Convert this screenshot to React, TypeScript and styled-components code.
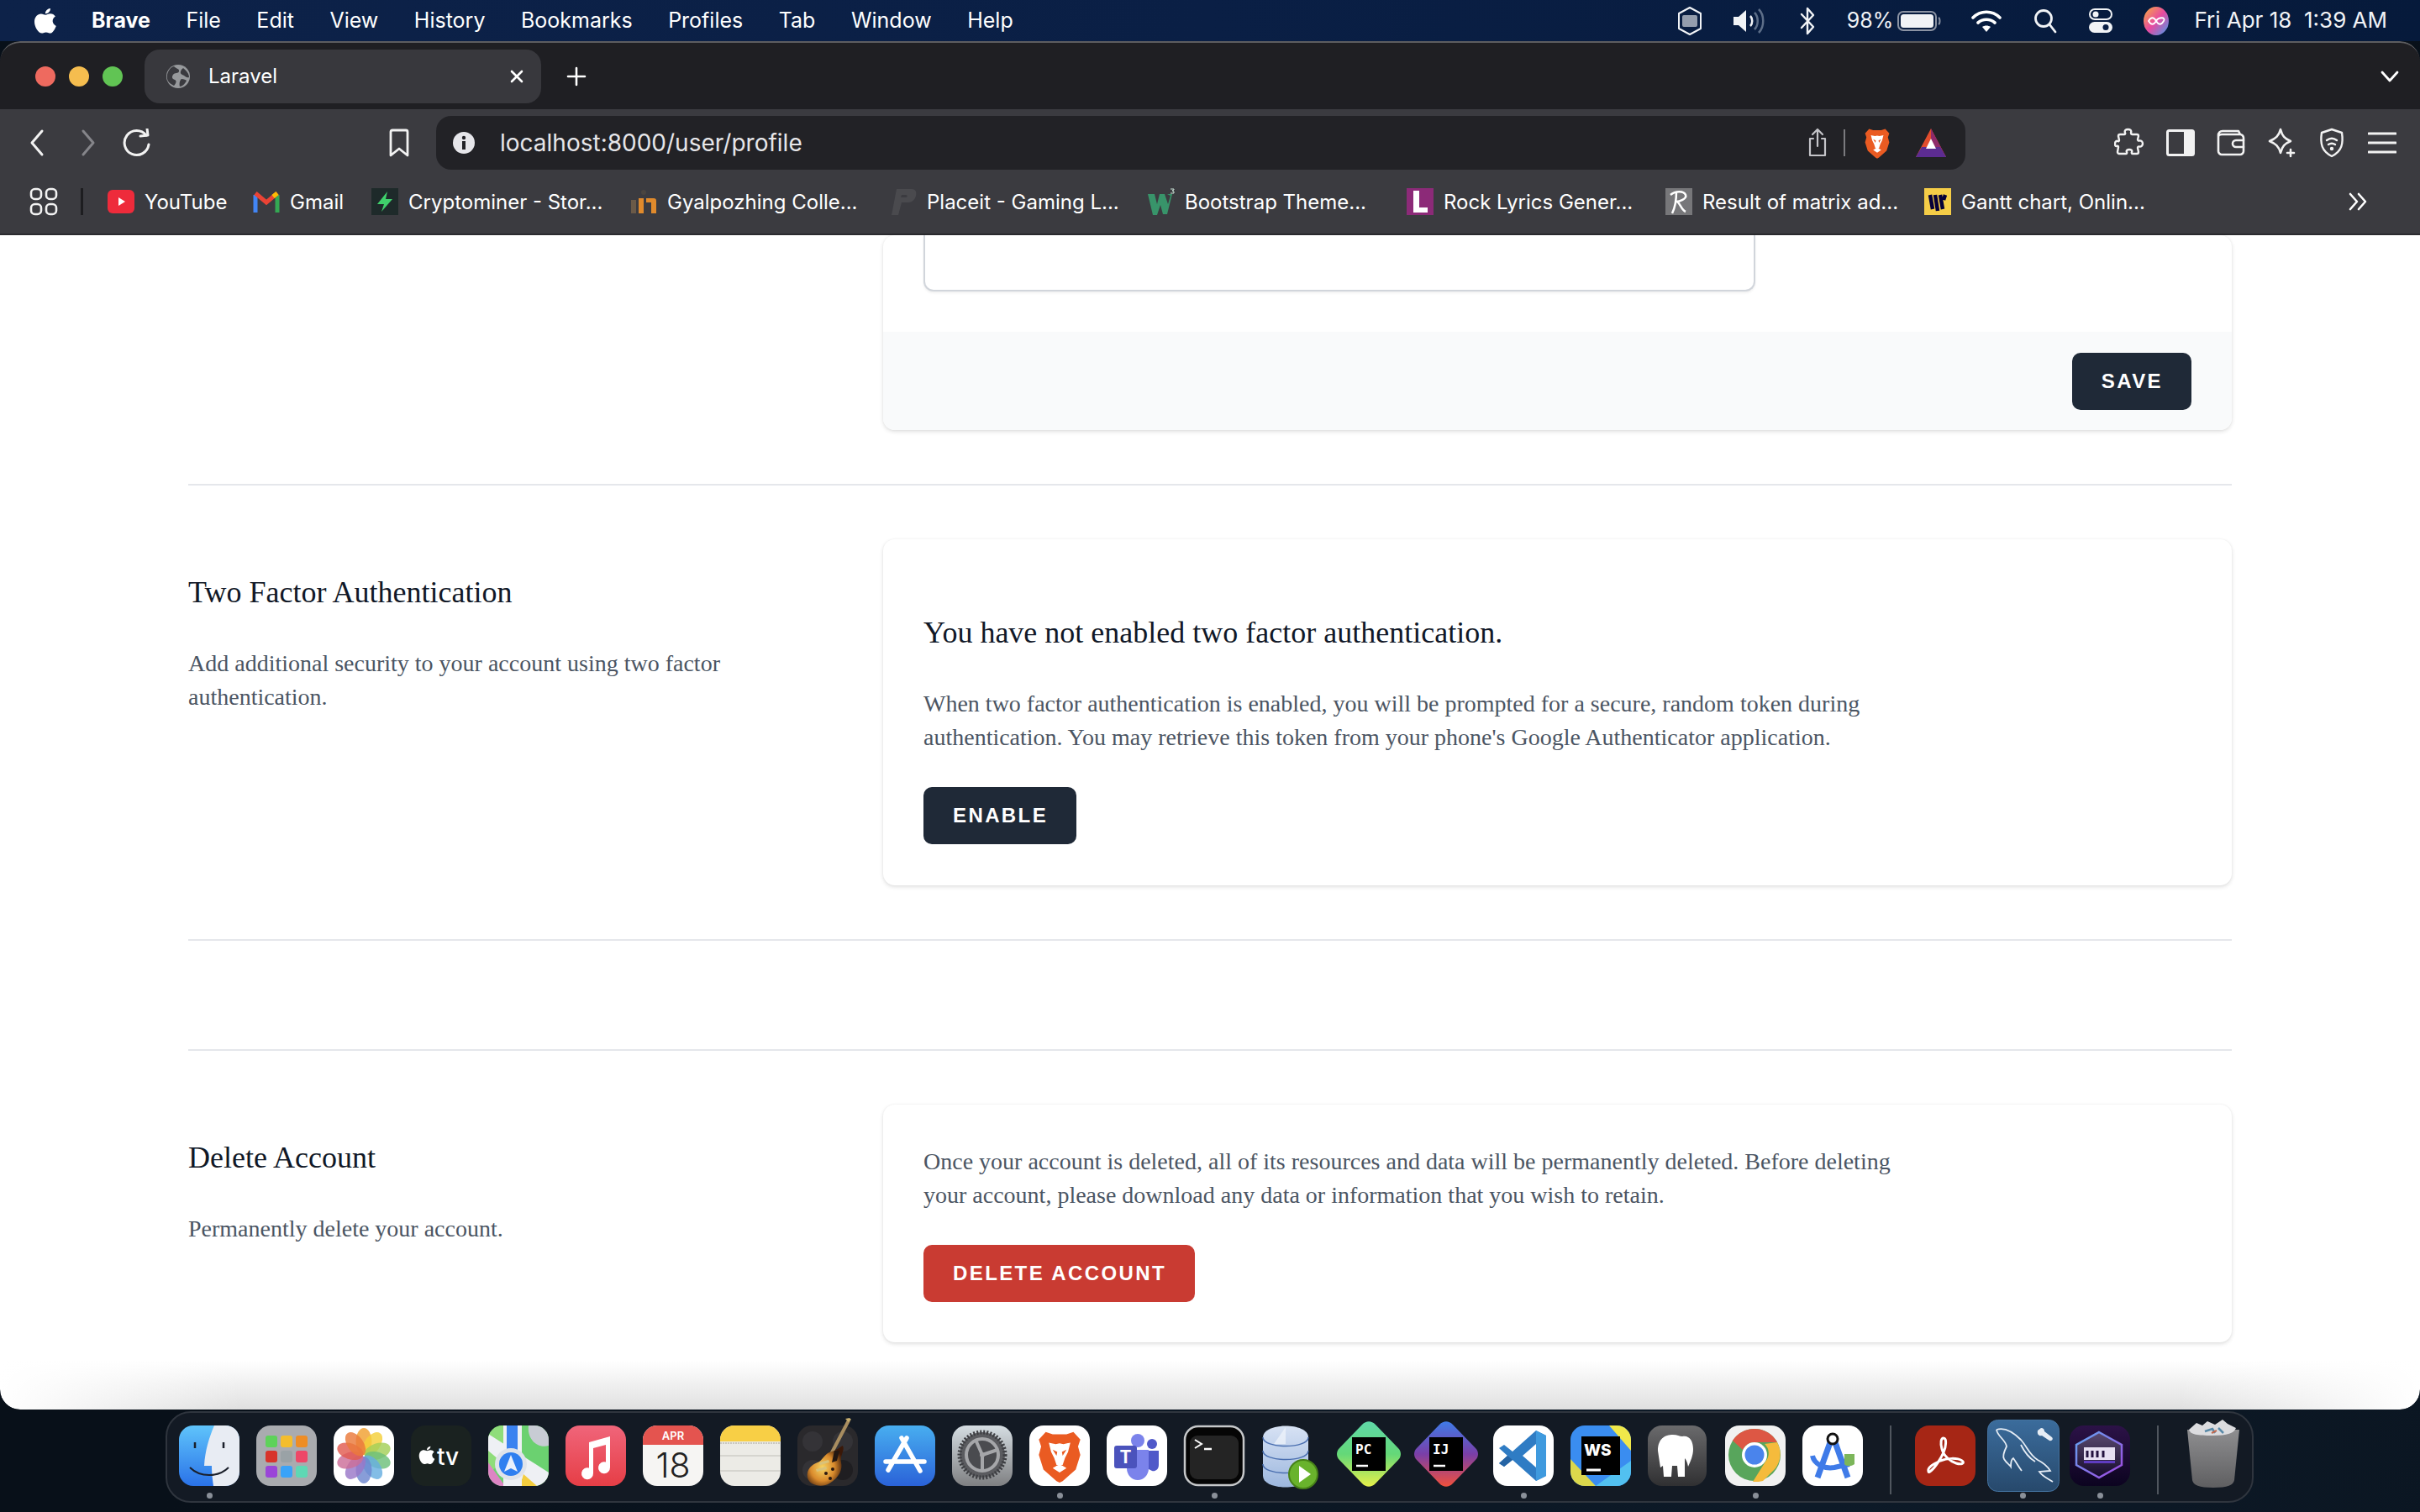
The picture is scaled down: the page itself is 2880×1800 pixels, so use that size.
import React from 'react';
import styled, { createGlobalStyle } from 'styled-components';

const GlobalStyle = createGlobalStyle`
  html, body { margin: 0; padding: 0; background: #0a1420; }
  * { box-sizing: border-box; }
`;

const Desktop = styled.div`
  width: 2880px;
  height: 1800px;
  overflow: hidden;
  display: flex;
  flex-direction: column;
  background: radial-gradient(circle at 75% 100%, #0d1a28, #081019 70%);
  font-family: Inter, 'Liberation Sans', sans-serif;
`;

/* menu bar */
const MenuBar = styled.header`
  height: 49px;
  flex: none;
  display: flex;
  align-items: center;
  padding-left: 40px;
  background: linear-gradient(90deg, #0d2249, #0a1f45 50%, #061a3b);
  color: #fff;
  font-size: 25px;
`;

const MenuItems = styled.nav`
  display: flex;
  gap: 42.5px;
  margin-left: 41px;
  padding-bottom: 2px;
  flex: 1;
`;

const MenuItem = styled.span<{ $bold?: boolean }>`
  font-weight: ${(p) => (p.$bold ? 700 : 400)};
  white-space: nowrap;
`;

const StatusArea = styled.div`
  display: flex;
  align-items: center;
  color: #f1f3f6;
  padding-right: 39px;
`;

const StatusIcon = styled.span<{ $w: number; $ml: number }>`
  display: flex;
  width: ${(p) => p.$w}px;
  margin-left: ${(p) => p.$ml}px;
  justify-content: center;
`;

const StatusText = styled.span<{ $ml: number; $size?: number }>`
  margin-left: ${(p) => p.$ml}px;
  font-size: ${(p) => p.$size ?? 25}px;
  padding-bottom: 2px;
  white-space: nowrap;
`;

/* browser window */
const Window = styled.main`
  height: 1629px;
  flex: none;
  display: flex;
  flex-direction: column;
  overflow: hidden;
  border-radius: 24px;
`;

const TabStrip = styled.div`
  height: 81px;
  flex: none;
  display: flex;
  align-items: center;
  background: #1f1f23;
  border-top: 2px solid #5d5d60;
  border-radius: 24px 24px 0 0;
  padding-left: 42px;
  color: #fff;
`;

const Light = styled.span<{ $c: string }>`
  width: 24px;
  height: 24px;
  border-radius: 50%;
  background: ${(p) => p.$c};
  margin-right: 16px;
`;

const Tab = styled.div`
  width: 472px;
  height: 64px;
  margin-left: 10px;
  display: flex;
  align-items: center;
  padding: 0 20px 0 26px;
  background: #38383d;
  border-radius: 18px;
  font-size: 24px;
`;

const TabTitle = styled.span`
  margin-left: 22px;
  flex: 1;
`;

const NewTab = styled.span`
  display: flex;
  margin-left: 30px;
  flex: 1;
`;

const TabChevron = styled.span`
  display: flex;
  margin-right: 25px;
`;

const Toolbar = styled.div`
  height: 150px;
  flex: none;
  background: #3b3b40;
  border-bottom: 2px solid #2b2b2f;
  padding-top: 8px;
`;

const NavRow = styled.div`
  height: 64px;
  display: flex;
  align-items: center;
`;

const NavButton = styled.span<{ $w: number; $ml: number }>`
  display: flex;
  justify-content: center;
  width: ${(p) => p.$w}px;
  margin-left: ${(p) => p.$ml}px;
`;

const AddressBar = styled.div`
  width: 1820px;
  height: 64px;
  margin-left: 30px;
  background: #222226;
  border-radius: 18px;
  display: flex;
  align-items: center;
  padding-left: 20px;
`;

const Url = styled.span`
  flex: 1;
  margin-left: 30px;
  font-size: 28px;
  color: #e6e6e9;
`;

const AddressDivider = styled.span`
  width: 2px;
  height: 32px;
  background: #7a7a7e;
  margin: 0 22px 0 19px;
`;

const BookmarkRow = styled.div`
  height: 32px;
  margin-top: 22px;
  display: flex;
  align-items: center;
  padding-left: 35px;
  color: #fff;
  font-size: 24px;
`;

const BookmarkDivider = styled.span`
  width: 3px;
  height: 32px;
  background: #1d1d20;
  margin: 0 29px 0 27px;
`;

const Bookmark = styled.span<{ $w: number }>`
  display: flex;
  align-items: center;
  gap: 12px;
  width: ${(p) => p.$w}px;
  white-space: nowrap;
`;

const MoreBookmarks = styled.span`
  display: flex;
  margin-left: 223px;
`;

/* page */
const Page = styled.div`
  height: 1398px;
  flex: none;
  padding: 0 224px;
  border-radius: 0 0 24px 24px;
  background:
    linear-gradient(90deg, #fff, rgba(255, 255, 255, 0) 10%, rgba(255, 255, 255, 0) 90%, #fff),
    linear-gradient(#fff 1340px, #e0e0e0);
  font-family: 'Liberation Serif', 'Times New Roman', serif;
  color: #111827;
`;

const Section = styled.section`
  display: grid;
  grid-template-columns: 779px 1605px;
  column-gap: 48px;
`;

const Rule = styled.hr<{ $my: number; $mb?: number }>`
  height: 2px;
  border: 0;
  background: #e5e7eb;
  margin: ${(p) => p.$my}px 0 ${(p) => p.$mb ?? p.$my}px;
`;

const Intro = styled.div`
  padding-top: 35px;
`;

const Heading = styled.h3`
  margin: 0;
  font-size: 36px;
  font-weight: 400;
  line-height: 56px;
`;

const Description = styled.p`
  margin: 37px 0 0;
  font-size: 28px;
  line-height: 40px;
  color: #4b5563;
`;

const Card = styled.div`
  background: #fff;
  border-radius: 14px;
  box-shadow: 0 2px 5px rgba(0, 0, 0, 0.12), 0 0 3px rgba(0, 0, 0, 0.05);
  overflow: hidden;
`;

const ClippedBody = styled.div`
  height: 115px;
  padding: 0 48px;
`;

const ClippedInput = styled.div`
  width: 990px;
  height: 67px;
  background: #fff;
  border: 2px solid #d1d5db;
  border-top: 0;
  border-radius: 0 0 12px 12px;
  box-shadow: 0 2px 3px rgba(0, 0, 0, 0.06);
`;

const CardFooter = styled.div`
  height: 117px;
  padding: 25px 48px 0;
  display: flex;
  justify-content: flex-end;
  background: #f9fafb;
`;

const CardBody = styled.div<{ $pb?: number }>`
  padding: 48px 48px ${(p) => p.$pb ?? 48}px;
`;

const CardTitle = styled.h3`
  margin: 35px 0 0;
  font-size: 36px;
  font-weight: 400;
  line-height: 56px;
`;

const CardText = styled.p<{ $mt: number }>`
  margin: ${(p) => p.$mt}px 0 0;
  max-width: 1152px;
  font-size: 28px;
  line-height: 40px;
  color: #4b5563;
`;

const Button = styled.button<{ $danger?: boolean; $mt?: number }>`
  display: block;
  height: 68px;
  margin-top: ${(p) => p.$mt ?? 0}px;
  padding: 0 34px 0 35px;
  border: 0;
  border-radius: 10px;
  background: ${(p) => (p.$danger ? '#c93b32' : '#1f2937')};
  color: #fff;
  font-family: 'Liberation Sans', Arial, sans-serif;
  font-size: 24px;
  font-weight: 700;
  letter-spacing: 0.1em;
`;

/* dock */
const DockArea = styled.footer`
  flex: 1;
  padding: 2px 0 0 197px;
`;

const Dock = styled.div`
  width: 2485px;
  height: 109px;
  display: flex;
  align-items: flex-start;
  padding: 15px 0 0 14px;
  background: #131a24;
  border: 2px solid #2f353e;
  border-radius: 30px;
`;

const DockItem = styled.div<{ $w?: number; $mr?: number }>`
  position: relative;
  width: ${(p) => p.$w ?? 72}px;
  margin-right: ${(p) => p.$mr ?? 20}px;
  height: 72px;
  flex: none;
  svg { display: block; overflow: visible; }
`;

const RunningDot = styled.span`
  position: absolute;
  left: 50%;
  top: 80px;
  width: 7px;
  height: 7px;
  margin-left: -3px;
  border-radius: 50%;
  background: #8a9099;
`;

const DockSeparator = styled.span<{ $mr: number }>`
  width: 2px;
  height: 82px;
  margin: 0 ${(p) => p.$mr}px 0 0;
  background: #50565e;
  flex: none;
`;

/* line icons */
const Line = ({ w, h, vb, sw = 2.5, c = 'currentColor', children }: { w: number; h: number; vb: string; sw?: number; c?: string; children: React.ReactNode }) => (
  <svg width={w} height={h} viewBox={vb} fill="none" stroke={c} strokeWidth={sw} strokeLinecap="round" strokeLinejoin="round">
    {children}
  </svg>
);

const applePath = 'M20 1c.3 3-2.6 6.4-6 6.2C13.600 4 16.800 1.200 20 1zM14.200 8.700c1.500 0 3-1.400 5.700-1.400 2.400 0 4.700 1.200 6 3.300-4.800 2.800-4 9.300.9 11.300-1.300 3.300-4 8.700-7 8.700-1.900 0-2.900-1.200-5-1.200s-3.200 1.200-5 1.200C6 30.600 1 23.500 1 17c0-6 3.800-9.600 7.800-9.600 2.400 0 4 1.300 5.400 1.300z';

const Apple = () => (
  <svg width="28" height="32" viewBox="0 0 28 32" fill="#fff">
    <path d={applePath} />
  </svg>
);

const Globe = () => (
  <svg width="28" height="28" viewBox="0 0 28 28">
    <circle cx="14" cy="14" r="14" fill="#97999c" />
    <path d="M9 2c3 3 7 3 6 6s-5 1-7 4-1 5 2 6 1 5-1 7C3 22 0 19 1 12 2 7 5 3 9 2zM20 4c4 3 7 7 7 11-3 1-4-1-6-2s-5-2-4-5 2-3 3-4zM18 17c3 0 5 1 6 2-2 4-5 7-8 7-1-3 0-8 2-9z" fill="#3a3a3f" />
  </svg>
);

const ExtensionIcon = () => (
  <Line w={36} h={36} vb="0 0 36 36" sw={2.4} c="#f2f2f2">
    <path d="M13 6c-1-3 1-4 3.500-4S21 3 20 6c0 1 1 2 2 2h5c1 0 2 1 2 2l-1 4c0 1 1 2 2 1.500 2-.5 4 1 4 3.500s-2 4-4 3.500c-1-.5-2 .5-2 1.500l1 5c0 1-1 2-2 2h-5c-1 0-1.500-1-1-2 1-2-1-3-3-3s-4 1-3 3c.5 1 0 2-1 2H6c-1 0-2-1-2-2l1-6c0-1-1-1.500-2-1-2 .5-2-2-2-3s1-4 3-3c1 .5 2 0 2-1L5 10c0-1 1-2 2-2h5c1 0 1.500-1 1-2z" />
  </Line>
);

const AppsIcon = () => (
  <Line w={34} h={34} vb="0 0 34 34" sw={2.6} c="#f2f2f2">
    <rect x="2" y="2" width="12" height="12" rx="4.500" />
    <rect x="20" y="2" width="12" height="12" rx="4.500" />
    <rect x="2" y="20" width="12" height="12" rx="4.500" />
    <rect x="20" y="20" width="12" height="12" rx="4.500" />
  </Line>
);

/* small favicon tiles */
const Tile = ({ bg, children }: { bg: string; children: React.ReactNode }) => (
  <svg width="32" height="32" viewBox="0 0 32 32" style={{ flex: 'none' }}>
    <rect width="32" height="32" fill={bg} />
    {children}
  </svg>
);

const favicons = {
  youtube: (
    <svg width="32" height="32" viewBox="0 0 32 32">
      <rect y="2" width="32" height="28" rx="6" fill="#ee2b3b" />
      <path d="M13 11l8 5-8 5z" fill="#fff" />
    </svg>
  ),
  gmail: (
    <svg width="32" height="32" viewBox="0 0 32 32" fill="none" strokeWidth="5">
      <path d="M3 29V8" stroke="#4285f4" />
      <path d="M29 29V8" stroke="#34a853" />
      <path d="M3 6l13 11L29 6" stroke="#ea4335" />
      <path d="M29 6l-5 4" stroke="#fbbc04" />
    </svg>
  ),
  crypto: (
    <Tile bg="#1e2a2a">
      <path d="M19 4L7 19h8l-3 9 13-15h-8z" fill="#3fd16b" />
    </Tile>
  ),
  gyal: (
    <svg width="32" height="32" viewBox="0 0 32 32">
      <path d="M1 14h6v16H1z" fill="#6b5a48" />
      <path d="M10 12h6v18h-6zM19 12h9c2 0 3 1 3 3v15h-6V17h-6z" fill="#e08a2c" />
      <circle cx="16" cy="5" r="3" fill="#4a4540" />
    </svg>
  ),
  placeit: (
    <svg width="32" height="32" viewBox="0 0 32 32">
      <path d="M8 1h18c5 0 6 4 5 8s-4 8-9 8h-8l-4 15H2z M14 8l-1 3h6c2 0 3-3 0-3z" fill="#4a4a4e" fillRule="evenodd" />
    </svg>
  ),
  w3: (
    <svg width="32" height="32" viewBox="0 0 32 32">
      <path d="M0 7h8l3 12 3-12h6l4 12 3-10-4-2h6l-6 24h-5L15 20l-4 12H6z" fill="#38946a" />
      <path d="M27 1h4v1l-2 1 2 1v2h-4" fill="none" stroke="#cfe8da" strokeWidth="1" />
    </svg>
  ),
  lyric: (
    <Tile bg="#8c2a78">
      <path d="M8 3h7v20h10v6H8z" fill="#fff" />
    </Tile>
  ),
  matrix: (
    <Tile bg="#77777a">
      <path d="M6 8c6-5 16-5 18 0s-8 8-11 8m0-12C13 12 12 22 8 30m6-14c4 3 5 10 10 12" fill="none" stroke="#fff" strokeWidth="2.500" />
    </Tile>
  ),
  gantt: (
    <Tile bg="#f5cd47">
      <path d="M7 8l3 17M13 8l3 19M19 8l3 17M25 8l-2 6" stroke="#050038" strokeWidth="4.500" fill="none" />
    </Tile>
  ),
};

const BraveLion = ({ w, h }: { w: number; h: number }) => (
  <svg width={w} height={h} viewBox="0 0 60 70">
    <path d="M12 4l9 3h18l9-3 9 10-3 9 3 11-6 19-17 15-4 2-4-2L9 53 3 34l3-11-3-9z" fill="#ea5b22" />
    <path d="M30 57l-9-6 5-3h8l5 3zM16 18l9 2 5-1 5 1 9-2-3 12-4 8-3 9-4 2-4-2-3-9-4-8z" fill="#fff" />
    <path d="M21 27l6 3-1 5zM39 27l-6 3 1 5z" fill="#ea5b22" />
  </svg>
);

const menus = ['File', 'Edit', 'View', 'History', 'Bookmarks', 'Profiles', 'Tab', 'Window', 'Help'];

const bookmarks: { label: string; icon: keyof typeof favicons; w: number }[] = [
  { label: 'YouTube', icon: 'youtube', w: 173 },
  { label: 'Gmail', icon: 'gmail', w: 141 },
  { label: 'Cryptominer - Stor...', icon: 'crypto', w: 308 },
  { label: 'Gyalpozhing Colle...', icon: 'gyal', w: 309 },
  { label: 'Placeit - Gaming L...', icon: 'placeit', w: 307 },
  { label: 'Bootstrap Theme...', icon: 'w3', w: 308 },
  { label: 'Rock Lyrics Gener...', icon: 'lyric', w: 308 },
  { label: 'Result of matrix ad...', icon: 'matrix', w: 308 },
  { label: 'Gantt chart, Onlin...', icon: 'gantt', w: 281 },
];

/* dock icons, all on a 72 grid */
const Squircle = ({ fill, children }: { fill: string; children?: React.ReactNode }) => (
  <svg width="72" height="72" viewBox="0 0 72 72">
    <rect width="72" height="72" rx="17" fill={fill} />
    {children}
  </svg>
);

const Defs = ({ id, from, to }: { id: string; from: string; to: string }) => (
  <defs>
    <linearGradient id={id} x1="0" y1="0" x2="0" y2="1">
      <stop offset="0" stopColor={from} />
      <stop offset="1" stopColor={to} />
    </linearGradient>
  </defs>
);

const Finder = () => (
  <svg width="72" height="72" viewBox="0 0 72 72">
    <Defs id="fd" from="#5fc4fb" to="#2a72e8" />
    <rect width="72" height="72" rx="17" fill="url(#fd)" />
    <path d="M42 0h13c10 0 17 7 17 17v38c0 10-7 17-17 17H41c-1-8-2-14-2-24H30c1-18 6-34 12-48z" fill="#e8ecf3" />
    <path d="M13 50c12 12 34 12 46 0" stroke="#1a1f2a" strokeWidth="2" fill="none" />
    <path d="M19 20v7M53 20v7" stroke="#1a1f2a" strokeWidth="2.500" />
  </svg>
);

const launchColors = ['#5ed25a', '#f4bd2c', '#ee8d25', '#d8342b', '#9aa2a6', '#ee4868', '#9a45d8', '#3aa3f8', '#5fd8b4'];

const Launchpad = () => (
  <Squircle fill="#a9abaf">
    {launchColors.map((c, i) => (
      <rect key={c} x={11 + (i % 3) * 18} y={12 + Math.floor(i / 3) * 18} width="14" height="14" rx="3" fill={c} />
    ))}
  </Squircle>
);

const petals = ['#f0a030', '#f4cf3a', '#a4cf58', '#6cc07a', '#68aee0', '#6e88d0', '#9a78c8', '#cc6e98', '#e25c50', '#ea7a3a'];

const Photos = () => (
  <Squircle fill="#fff">
    {petals.map((c, i) => (
      <ellipse key={c} cx="36" cy="19" rx="9.500" ry="16" fill={c} opacity="0.82" transform={`rotate(${i * 36} 36 36)`} />
    ))}
  </Squircle>
);

const AppleTv = () => (
  <Squircle fill="#1a2220">
    <g transform="translate(9 24) scale(.72)" fill="#fff">
      <path d={applePath} />
    </g>
    <text x="31" y="47" fontFamily="Inter, sans-serif" fontSize="28" fontWeight="500" fill="#fff">tv</text>
  </Squircle>
);

const Maps = () => (
  <svg width="72" height="72" viewBox="0 0 72 72">
    <clipPath id="mc"><rect width="72" height="72" rx="17" /></clipPath>
    <g clipPath="url(#mc)">
      <rect width="72" height="72" fill="#6bd170" />
      <path d="M0 0h18L36 26 0 58z" fill="#8fdd7a" />
      <path d="M0 10l72 46v16H50L0 30z" fill="#eef0f4" />
      <path d="M0 44l20 28H0z" fill="#dd85c4" />
      <path d="M38 72l4-14 16 14z" fill="#f4cd3e" />
      <path d="M18 0h22v72H18z" fill="#eef0f4" />
      <path d="M22 0h13v50H22z" fill="#3b82f0" />
      <path d="M48 0h24v24c-14 4-26-8-24-24z" fill="#c8ccd4" />
      <circle cx="27" cy="46" r="19" fill="#dfe3ea" />
      <circle cx="27" cy="46" r="14" fill="#2f7ff0" />
      <path d="M27 35l8 20-8-4-8 4z" fill="#eaf0fb" />
    </g>
  </svg>
);

const Music = () => (
  <svg width="72" height="72" viewBox="0 0 72 72">
    <Defs id="mu" from="#f0657a" to="#e63e46" />
    <rect width="72" height="72" rx="17" fill="url(#mu)" />
    <path d="M28 20l25-7v37a7 7 0 1 1-5-6.500V23l-15 4v30a7 7 0 1 1-5-6.500z" fill="#fff" />
  </svg>
);

const Calendar = () => (
  <svg width="72" height="72" viewBox="0 0 72 72">
    <clipPath id="cc"><rect width="72" height="72" rx="17" /></clipPath>
    <g clipPath="url(#cc)">
      <rect width="72" height="72" fill="#f6f5f3" />
      <rect width="72" height="23" fill="#e4544f" />
    </g>
    <text x="36" y="17" textAnchor="middle" fontFamily="Inter, sans-serif" fontSize="13" fontWeight="600" fill="#fff">APR</text>
    <text x="36" y="62" textAnchor="middle" fontFamily="Inter, sans-serif" fontSize="41" fontWeight="300" fill="#222">18</text>
  </svg>
);

const Notes = () => (
  <svg width="72" height="72" viewBox="0 0 72 72">
    <clipPath id="nc"><rect width="72" height="72" rx="17" /></clipPath>
    <g clipPath="url(#nc)">
      <rect width="72" height="72" fill="#ecebe6" />
      <rect width="72" height="19" fill="#f8cf45" />
      <path d="M0 21h72" stroke="#c9c7c0" strokeWidth="2" strokeDasharray="2 1" />
      <path d="M0 36h72M0 54h72" stroke="#d6d5cf" strokeWidth="2" />
    </g>
  </svg>
);

const GarageBand = () => (
  <svg width="72" height="72" viewBox="0 0 72 72">
    <defs>
      <radialGradient id="gb" cx="0.42" cy="0.55" r="0.6">
        <stop offset="0" stopColor="#f6d564" />
        <stop offset="0.55" stopColor="#d98a2c" />
        <stop offset="1" stopColor="#3a1808" />
      </radialGradient>
    </defs>
    <rect width="72" height="72" rx="17" fill="#2a292c" />
    <circle cx="18" cy="19" r="12" fill="#343337" />
    <circle cx="54" cy="19" r="12" fill="#343337" />
    <circle cx="18" cy="53" r="12" fill="#343337" />
    <circle cx="54" cy="53" r="12" fill="#1f1e21" />
    <path d="M61-6L40 34" stroke="#a88d60" strokeWidth="4" />
    <path d="M57-8l5-1 2 2-3 3z" fill="#c9b070" />
    <path d="M41 31c5-1 9-5 13-7 3 6-4 12-2 20 2 8-2 18-14 25-8 5-24 3-26-7-2-10 6-16 12-18s8-11 17-13z" fill="url(#gb)" />
    <path d="M44 30l-3 14 6-2 3-12z" fill="#231712" />
    <path d="M26 44l11-3 1 3-11 3zM22 52l12-3 1 3-12 3z" fill="#d9c27a" />
    <circle cx="34" cy="57" r="2" fill="#2a1810" />
    <circle cx="42" cy="52" r="2" fill="#2a1810" />
    <circle cx="39" cy="63" r="2" fill="#2a1810" />
  </svg>
);

const AppStore = () => (
  <svg width="72" height="72" viewBox="0 0 72 72">
    <Defs id="as" from="#48aef0" to="#2a62d8" />
    <rect width="72" height="72" rx="17" fill="url(#as)" />
    <path d="M38 15L16 53M32 15l22 39M13 43h46" stroke="#fff" strokeWidth="5.500" strokeLinecap="round" fill="none" />
  </svg>
);

const Settings = () => (
  <svg width="72" height="72" viewBox="0 0 72 72">
    <Defs id="st" from="#d5dde2" to="#7f8082" />
    <rect width="72" height="72" rx="17" fill="url(#st)" />
    <circle cx="36" cy="35" r="27" fill="#5a5b5f" stroke="#3d3e42" strokeWidth="5" strokeDasharray="2 2" />
    <circle cx="36" cy="35" r="19" fill="#4a4b4f" stroke="#a5a6a9" strokeWidth="4" />
    <path d="M36 35L28 17M36 35l18-6M36 35v18" stroke="#a5a6a9" strokeWidth="4" />
    <circle cx="36" cy="35" r="3" fill="#a5a6a9" />
  </svg>
);

const BraveDock = () => (
  <Squircle fill="#fff">
    <g transform="translate(7 4)"><BraveLion w={58} h={64} /></g>
  </Squircle>
);

const Teams = () => (
  <Squircle fill="#fff">
    <circle cx="37" cy="18" r="8" fill="#7b83eb" />
    <circle cx="54" cy="22" r="6" fill="#5059c9" />
    <path d="M46 30h16v17c0 6-5 8-8 7l-6-3z" fill="#5059c9" />
    <path d="M24 29h26v22c0 8-6 14-13 14s-13-6-13-14z" fill="#7b83eb" />
    <rect x="9" y="24" width="27" height="27" rx="3" fill="#4b53bc" />
    <text x="22.500" y="45" textAnchor="middle" fontFamily="Inter, sans-serif" fontSize="21" fontWeight="700" fill="#fff">T</text>
  </Squircle>
);

const Terminal = () => (
  <svg width="72" height="72" viewBox="0 0 72 72">
    <rect x="1" y="1" width="70" height="70" rx="16" fill="#050505" stroke="#c6c8ca" strokeWidth="2.500" />
    <rect x="7" y="12" width="58" height="52" rx="9" fill="#242424" />
    <path d="M13 17l8 5-8 5" stroke="#fff" strokeWidth="2" fill="none" />
    <path d="M24 28h9" stroke="#fff" strokeWidth="2.500" />
  </svg>
);

const Database = () => (
  <svg width="72" height="76" viewBox="0 0 72 76">
    <Defs id="db" from="#d7e2f4" to="#9db7de" />
    <path d="M2 14c0-18 54-18 54 0v46c0 18-54 18-54 0z" fill="url(#db)" />
    <path d="M2 14c0 14 54 14 54 0M2 30c0 14 54 14 54 0M2 46c0 14 54 14 54 0" stroke="#4a6fb0" strokeWidth="1.500" fill="none" />
    <path d="M29 2v20l-14 0z" fill="#f1f5fb" opacity="0.7" />
    <circle cx="50" cy="58" r="17" fill="#69b32c" stroke="#478218" strokeWidth="2" />
    <path d="M45 48l14 10-14 10z" fill="#fff" />
  </svg>
);

const Diamond = ({ id, from, to, label, mid }: { id: string; from: string; to: string; mid: string; label: string }) => (
  <svg width="78" height="78" viewBox="0 0 78 78" style={{ margin: '-5px 0 0 -3px' }}>
    <defs>
      <linearGradient id={id} x1="0" y1="0" x2="0" y2="1">
        <stop offset="0" stopColor={from} />
        <stop offset="0.5" stopColor={mid} />
        <stop offset="1" stopColor={to} />
      </linearGradient>
    </defs>
    <path d="M31 4c5-5 11-5 16 0l27 28c4 4 4 10 0 14L47 74c-5 5-11 5-16 0L4 46c-4-4-4-10 0-14z" fill={`url(#${id})`} />
    <rect x="19" y="19" width="40" height="40" fill="#000" />
    <text x="23" y="39" fontFamily="'DejaVu Sans Mono', monospace" fontSize="16" fontWeight="700" fill="#fff">{label}</text>
    <path d="M24 53h14" stroke="#fff" strokeWidth="2.500" />
  </svg>
);

const VsCode = () => (
  <Squircle fill="#fff">
    <path d="M51 6l12 6v48l-12 6-28-25-10 8-6-4 10-9-10-9 6-4 10 8z" fill="#2f7cc4" />
    <path d="M51 6v60l12-6V12z" fill="#3f9ade" />
    <path d="M51 22L35 36l16 14z" fill="#fff" />
    <path d="M23 41l-10 8-6-4 10-9z" fill="#2564a4" />
  </Squircle>
);

const WebStorm = () => (
  <svg width="72" height="72" viewBox="0 0 72 72">
    <clipPath id="wc"><rect width="72" height="72" rx="17" /></clipPath>
    <g clipPath="url(#wc)">
      <rect width="72" height="72" fill="#3a8df0" />
      <path d="M46 0h26v30z" fill="#f0e84a" />
      <path d="M0 40l30 32H0z" fill="#dcd84c" />
      <path d="M30 72L72 42v30z" fill="#52c0f0" />
    </g>
    <rect x="13" y="13" width="46" height="46" fill="#000" />
    <text x="16" y="36" fontFamily="Inter, sans-serif" fontSize="19" fontWeight="800" fill="#fff">WS</text>
    <path d="M19 53h17" stroke="#fff" strokeWidth="3" />
  </svg>
);

const Mamp = () => (
  <svg width="72" height="72" viewBox="0 0 72 72">
    <Defs id="mp" from="#6a6a6c" to="#303032" />
    <rect width="70" height="72" rx="17" fill="url(#mp)" />
    <path d="M12 30c0-14 8-19 18-19 5 0 8 2 11 2 8-2 13 5 13 15 0 8-3 14-6 21-1-5-2-8-4-10v22h-8l-1-13h-6l-1 13h-9l-1-13-3 2z" fill="#fff" />
  </svg>
);

const Chrome = () => (
  <Squircle fill="#f1f1f1">
    <circle cx="35" cy="35" r="31" fill="#58a55c" />
    <path d="M35 4a31 31 0 0 1 27 16H35a15 15 0 0 0-14 9L9 18C15 9 24 4 35 4z" fill="#dd5744" />
    <path d="M62 20c6 11 4 23-2 31L45 66c-3 1-7 1-12 1l15-24a15 15 0 0 0-1-21z" fill="#f5bb3c" />
    <circle cx="35" cy="35" r="15" fill="#fff" />
    <circle cx="35" cy="35" r="11.500" fill="#4a84ec" />
  </Squircle>
);

const AndroidStudio = () => (
  <Squircle fill="#fff">
    <path d="M36 12L18 62M36 12l18 50" stroke="#3f7be8" strokeWidth="7" fill="none" />
    <path d="M12 36c2 10 14 16 26 14l18-4" stroke="#3f7be8" strokeWidth="6" fill="none" />
    <circle cx="36" cy="16" r="6" fill="#fff" stroke="#111" strokeWidth="3" />
    <path d="M50 34h12v12c-4 3-10 3-12 0z" fill="#7cb65a" />
  </Squircle>
);

const Acrobat = () => (
  <Squircle fill="#a62615">
    <path d="M16 55C14 50 22 46 30 42C38 39 50 38 56 42C60 45 55 47 49 45C42 43 34 36 32 28C30 20 31 15 34 15C38 15 37 25 34 32C31 39 24 50 19 54C18 55 16 56 16 55Z" fill="none" stroke="#fff" strokeWidth="3" />
  </Squircle>
);

const MySql = () => (
  <svg width="86" height="86" viewBox="0 0 86 86" style={{ marginTop: '-7px' }}>
    <defs>
      <linearGradient id="ms" x1="0" y1="0" x2="0" y2="1">
        <stop offset="0" stopColor="#3b6c9c" />
        <stop offset="1" stopColor="#27496c" />
      </linearGradient>
    </defs>
    <rect x="0.500" y="0.500" width="85" height="85" rx="12" fill="url(#ms)" stroke="#44729f" />
    <path d="M11 12C20 9 30 14 40 24C48 33 50 42 60 48C68 52 72 56 75 61L62 62C66 68 72 70 78 74M11 12C12 20 22 24 23 32C20 38 18 44 20 47C23 52 26 53 28 56C28 50 29 47 31 46C34 50 37 56 41 61M40 30C44 38 50 46 57 50" stroke="#e6edf5" strokeWidth="1.800" fill="none" />
    <path d="M60 13l4-3c3 0 4 2 4 4l9 7c2 2 0 5-3 4l-9-6c-3 1-6-1-5-6z" fill="#e6edf5" />
  </svg>
);

const Prism = () => (
  <svg width="72" height="72" viewBox="0 0 72 72">
    <defs>
      <linearGradient id="pr" x1="0" y1="0" x2="0" y2="1">
        <stop offset="0" stopColor="#2c1247" />
        <stop offset="1" stopColor="#0c0420" />
      </linearGradient>
      <linearGradient id="ph" x1="0" y1="0" x2="0" y2="1">
        <stop offset="0" stopColor="#5a4a70" />
        <stop offset="1" stopColor="#150a2c" />
      </linearGradient>
      <linearGradient id="ps" x1="0" y1="0" x2="1" y2="1">
        <stop offset="0" stopColor="#62a8f2" />
        <stop offset="1" stopColor="#a146e0" />
      </linearGradient>
    </defs>
    <rect width="72" height="72" rx="17" fill="url(#pr)" />
    <path d="M35 8l27 15v24L35 62 8 47V23z" fill="url(#ph)" stroke="url(#ps)" strokeWidth="2.500" />
    <path d="M17 26h37v15H17z" fill="#e6dff2" />
    <path d="M21 30v8M27 30v8M33 30v8M40 30v8" stroke="#23123f" strokeWidth="3" />
    <path d="M17 43.500h37" stroke="#5f3cc0" strokeWidth="3" />
  </svg>
);

const Trash = () => (
  <svg width="64" height="82" viewBox="0 0 64 82" style={{ marginTop: '-7px' }}>
    <Defs id="tr" from="#8e8e90" to="#5f5f61" />
    <path d="M1 12h62l-6 60c-1 6-8 9-25 9s-24-3-25-9z" fill="url(#tr)" />
    <path d="M3 12l9-8 7 3 6-5 9 4 9-6 6 5 10 5c-2 6-10 9-28 9S5 18 3 12z" fill="#dcdcdf" />
    <path d="M22 14l9-3 3 5M38 10l6 6" stroke="#5a8aa8" strokeWidth="2.500" fill="none" />
    <path d="M30 16l6-3" stroke="#c06a50" strokeWidth="2" />
  </svg>
);

const dockItems: { key: string; el: React.ReactNode; dot?: boolean }[] = [
  { key: 'finder', el: <Finder />, dot: true },
  { key: 'launchpad', el: <Launchpad /> },
  { key: 'photos', el: <Photos /> },
  { key: 'tv', el: <AppleTv /> },
  { key: 'maps', el: <Maps /> },
  { key: 'music', el: <Music /> },
  { key: 'calendar', el: <Calendar /> },
  { key: 'notes', el: <Notes /> },
  { key: 'garageband', el: <GarageBand /> },
  { key: 'appstore', el: <AppStore /> },
  { key: 'settings', el: <Settings /> },
  { key: 'brave', el: <BraveDock />, dot: true },
  { key: 'teams', el: <Teams /> },
  { key: 'terminal', el: <Terminal />, dot: true },
  { key: 'db', el: <Database /> },
  { key: 'pc', el: <Diamond id="pc" from="#5fd8a8" mid="#64d878" to="#e6f04a" label="PC" /> },
  { key: 'ij', el: <Diamond id="ij" from="#3f7be8" mid="#7a3fa8" to="#f0503c" label="IJ" /> },
  { key: 'vscode', el: <VsCode />, dot: true },
  { key: 'ws', el: <WebStorm /> },
  { key: 'mamp', el: <Mamp /> },
  { key: 'chrome', el: <Chrome />, dot: true },
];

const App = () => (
  <>
    <GlobalStyle />
    <Desktop>
      <MenuBar>
        <Apple />
        <MenuItems>
          <MenuItem $bold>Brave</MenuItem>
          {menus.map((m) => (
            <MenuItem key={m}>{m}</MenuItem>
          ))}
        </MenuItems>
        <StatusArea>
          <StatusIcon $w={34} $ml={0}>
            <Line w={32} h={36} vb="0 0 32 36" sw={2}>
              <path d="M16 2l13 7v18l-13 7-13-7V9z" />
              <rect x="8" y="12" width="16" height="12" rx="1" fill="currentColor" opacity="0.6" />
            </Line>
          </StatusIcon>
          <StatusIcon $w={40} $ml={33}>
            <svg width="40" height="32" viewBox="0 0 40 32" fill="none">
              <path d="M2 11h6l9-8v26l-9-8H2z" fill="#f1f3f6" />
              <path d="M22 10c3 3 3 9 0 12" stroke="#f1f3f6" strokeWidth="2.500" />
              <path d="M27 6c5 5 5 15 0 20M32 2c7 7 7 21 0 28" stroke="#5d6e88" strokeWidth="2.500" />
            </svg>
          </StatusIcon>
          <StatusIcon $w={20} $ml={40}>
            <Line w={18} h={34} vb="0 0 18 34" sw={2.4}>
              <path d="M2 9l14 15-7 8V2l7 8L2 25" />
            </Line>
          </StatusIcon>
          <StatusText $ml={37}>98%</StatusText>
          <StatusIcon $w={52} $ml={5}>
            <svg width="52" height="24" viewBox="0 0 52 24">
              <rect x="1" y="1" width="45" height="22" rx="6" fill="none" stroke="#8b93a3" strokeWidth="2" />
              <rect x="4" y="4" width="39" height="16" rx="3.500" fill="#f1f3f6" />
              <path d="M49 8c2 1 2 7 0 8" stroke="#8b93a3" strokeWidth="2" fill="none" />
            </svg>
          </StatusIcon>
          <StatusIcon $w={36} $ml={36}>
            <svg width="36" height="28" viewBox="0 0 36 28" fill="none" stroke="#fff" strokeWidth="3.6" strokeLinecap="round">
              <path d="M2 10c9-9 23-9 32 0M8 16c6-5 14-5 20 0" />
              <path d="M18 27l-5-6c3-2 7-2 10 0z" fill="#fff" stroke="none" />
            </svg>
          </StatusIcon>
          <StatusIcon $w={30} $ml={37}>
            <Line w={28} h={30} vb="0 0 28 30" sw={2.8}>
              <circle cx="12" cy="12" r="9.500" />
              <path d="M19 19l7 9" />
            </Line>
          </StatusIcon>
          <StatusIcon $w={28} $ml={37}>
            <svg width="28" height="30" viewBox="0 0 28 30">
              <rect x="1" y="1" width="26" height="12" rx="6" fill="none" stroke="#f1f3f6" strokeWidth="2" />
              <circle cx="8" cy="7" r="3.500" fill="#f1f3f6" />
              <rect x="0" y="16" width="28" height="13" rx="6.500" fill="#f1f3f6" />
              <circle cx="20" cy="22.500" r="3.500" fill="#0a1f45" />
            </svg>
          </StatusIcon>
          <StatusIcon $w={30} $ml={37}>
            <svg width="30" height="34" viewBox="0 0 30 34">
              <defs>
                <linearGradient id="siri" x1="0" y1="0" x2="1" y2="1">
                  <stop offset="0" stopColor="#f7b03c" />
                  <stop offset="0.5" stopColor="#e84aa0" />
                  <stop offset="1" stopColor="#3fa0f0" />
                </linearGradient>
              </defs>
              <ellipse cx="15" cy="17" rx="15" ry="17" fill="url(#siri)" />
              <path d="M6 17c3-5 6-5 9 0s6 5 9 0-6-5-9 0-6 5-9 0z" fill="none" stroke="#fff" strokeWidth="1.800" />
            </svg>
          </StatusIcon>
          <StatusText $ml={30} $size={26}>Fri Apr 18&nbsp; 1:39 AM</StatusText>
        </StatusArea>
      </MenuBar>

      <Window>
        <TabStrip>
          <Light $c="#ee6a5f" />
          <Light $c="#f5bd4f" />
          <Light $c="#61c454" />
          <Tab>
            <Globe />
            <TabTitle>Laravel</TabTitle>
            <Line w={18} h={18} vb="0 0 18 18" sw={2.6}>
              <path d="M3 3l12 12M15 3L3 15" />
            </Line>
          </Tab>
          <NewTab>
            <Line w={24} h={24} vb="0 0 24 24" sw={2.6}>
              <path d="M12 2v20M2 12h20" />
            </Line>
          </NewTab>
          <TabChevron>
            <Line w={22} h={14} vb="0 0 22 14" sw={2.8}>
              <path d="M2 2l9 10 9-10" />
            </Line>
          </TabChevron>
        </TabStrip>

        <Toolbar>
          <NavRow>
            <NavButton $w={20} $ml={34}>
              <Line w={18} h={34} vb="0 0 18 34" sw={3} c="#f2f2f2">
                <path d="M15 3L3 17l12 14" />
              </Line>
            </NavButton>
            <NavButton $w={20} $ml={41}>
              <Line w={18} h={34} vb="0 0 18 34" sw={3} c="#85858a">
                <path d="M3 3l12 14L3 31" />
              </Line>
            </NavButton>
            <NavButton $w={36} $ml={30}>
              <Line w={34} h={34} vb="0 0 34 34" sw={3} c="#f2f2f2">
                <path d="M28 8A14.500 14.500 0 1 0 31 19" />
                <path d="M21 9l9-1-1-8" fill="none" />
              </Line>
            </NavButton>
            <NavButton $w={28} $ml={280}>
              <Line w={26} h={34} vb="0 0 26 34" sw={2.8} c="#f2f2f2">
                <path d="M3 4c0-1.500 1-2 2-2h16c1 0 2 .5 2 2v28l-10-8-10 8z" />
              </Line>
            </NavButton>
            <AddressBar>
              <svg width="26" height="26" viewBox="0 0 26 26">
                <circle cx="13" cy="13" r="13" fill="#e6e6ea" />
                <rect x="11" y="11" width="4" height="10" fill="#222226" />
                <circle cx="13" cy="7" r="2.200" fill="#222226" />
              </svg>
              <Url>localhost:8000/user/profile</Url>
              <Line w={24} h={36} vb="0 0 24 36" sw={2.2} c="#c4c4c8">
                <path d="M12 22V2M6 8l6-6 6 6M7 13H3v20h18V13h-4" />
              </Line>
              <AddressDivider />
              <BraveLion w={32} h={38} />
              <svg width="36" height="34" viewBox="0 0 36 34" style={{ marginLeft: 30, marginRight: 23 }}>
                <path d="M18 0l18 34H0z" fill="#e24d2d" />
                <path d="M18 0l18 34H18z" fill="#8f2a6a" />
                <path d="M0 34l7-12h22l7 12z" fill="#5c2c91" />
                <path d="M18 12l6 12H12z" fill="#fff" />
              </svg>
            </AddressBar>
            <NavButton $w={36} $ml={177}>
              <ExtensionIcon />
            </NavButton>
            <NavButton $w={34} $ml={26}>
              <svg width="34" height="32" viewBox="0 0 34 32">
                <rect x="1.500" y="1.500" width="31" height="29" rx="2" fill="none" stroke="#f2f2f2" strokeWidth="3" />
                <rect x="21" y="1.500" width="12" height="29" fill="#f2f2f2" />
              </svg>
            </NavButton>
            <NavButton $w={34} $ml={26}>
              <Line w={34} h={32} vb="0 0 34 32" sw={2.6} c="#f2f2f2">
                <path d="M2 7c0-3 2-5 5-5h19l2 4M2 7v19c0 2 2 4 4 4h22c2 0 4-2 4-4V10c0-2-2-4-4-4H6c-2 0-4 1-4 3" />
                <path d="M32 13h-9a3.500 3.500 0 0 0 0 8h9" />
              </Line>
            </NavButton>
            <NavButton $w={34} $ml={26}>
              <Line w={34} h={36} vb="0 0 34 36" sw={2.6} c="#f2f2f2">
                <path d="M16 2c2 8 5 11 12 14-7 3-10 6-12 14C14 22 10 19 3 16 10 13 14 10 16 2z" />
                <path d="M28 26v8M24 30h8" />
              </Line>
            </NavButton>
            <NavButton $w={32} $ml={27}>
              <Line w={30} h={36} vb="0 0 30 36" sw={2.4} c="#f2f2f2">
                <path d="M15 2l12 4c2 13 0 22-12 28C3 28 1 19 3 6z" />
                <path d="M9 15c4-3 8-3 12 0M11 20c3-2 5-2 8 0" />
                <circle cx="15" cy="25" r="1" fill="#f2f2f2" />
              </Line>
            </NavButton>
            <NavButton $w={34} $ml={27}>
              <Line w={34} h={28} vb="0 0 34 28" sw={3} c="#f2f2f2">
                <path d="M1 3h32M1 14h32M1 25h32" />
              </Line>
            </NavButton>
          </NavRow>
          <BookmarkRow>
            <AppsIcon />
            <BookmarkDivider />
            {bookmarks.map((b) => (
              <Bookmark key={b.label} $w={b.w}>
                {favicons[b.icon]}
                {b.label}
              </Bookmark>
            ))}
            <MoreBookmarks>
              <Line w={24} h={22} vb="0 0 24 22" sw={2.6}>
                <path d="M3 2l8 9-8 9M13 2l8 9-8 9" />
              </Line>
            </MoreBookmarks>
          </BookmarkRow>
        </Toolbar>

        <Page>
          <Section>
            <span />
            <Card>
              <ClippedBody>
                <ClippedInput />
              </ClippedBody>
              <CardFooter>
                <Button>SAVE</Button>
              </CardFooter>
            </Card>
          </Section>
          <Rule $my={64} />
          <Section>
            <Intro>
              <Heading>Two Factor Authentication</Heading>
              <Description>Add additional security to your account using two factor authentication.</Description>
            </Intro>
            <Card>
              <CardBody $pb={49}>
                <CardTitle>You have not enabled two factor authentication.</CardTitle>
                <CardText $mt={37}>
                  When two factor authentication is enabled, you will be prompted for a secure, random token during
                  authentication. You may retrieve this token from your phone's Google Authenticator application.
                </CardText>
                <Button $mt={39}>ENABLE</Button>
              </CardBody>
            </Card>
          </Section>
          <Rule $my={64} $mb={129} />
          <Rule $my={0} $mb={64} />
          <Section>
            <Intro>
              <Heading>Delete Account</Heading>
              <Description>Permanently delete your account.</Description>
            </Intro>
            <Card>
              <CardBody>
                <CardText $mt={0}>
                  Once your account is deleted, all of its resources and data will be permanently deleted. Before
                  deleting your account, please download any data or information that you wish to retain.
                </CardText>
                <Button $danger $mt={39}>DELETE ACCOUNT</Button>
              </CardBody>
            </Card>
          </Section>
        </Page>
      </Window>

      <DockArea>
        <Dock>
          {dockItems.map((d) => (
            <DockItem key={d.key}>
              {d.el}
              {d.dot && <RunningDot />}
            </DockItem>
          ))}
          <DockItem $mr={32}>
            <AndroidStudio />
          </DockItem>
          <DockSeparator $mr={28} />
          <DockItem $mr={14}>
            <Acrobat />
          </DockItem>
          <DockItem $w={84} $mr={14}>
            <MySql />
            <RunningDot />
          </DockItem>
          <DockItem $mr={32}>
            <Prism />
            <RunningDot />
          </DockItem>
          <DockSeparator $mr={33} />
          <DockItem $w={64}>
            <Trash />
          </DockItem>
        </Dock>
      </DockArea>
    </Desktop>
  </>
);

export default App;
